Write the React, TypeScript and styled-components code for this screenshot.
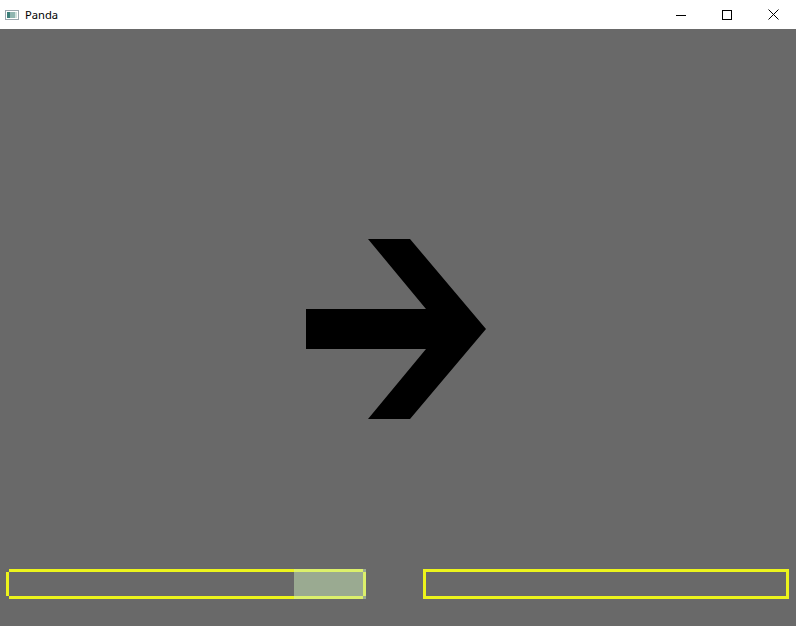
import React from "react";
import styled, { createGlobalStyle } from "styled-components";

const Global = createGlobalStyle`
  html, body { margin: 0; padding: 0; background: #696969; }
  body { font-family: "Segoe UI", "Noto Sans", "Liberation Sans", sans-serif; }
  #root { width: 796px; height: 626px; overflow: hidden; }
`;

const Window = styled.div`
  width: 796px;
  height: 626px;
  display: flex;
  flex-direction: column;
  background: #696969;
`;

const TitleBar = styled.div`
  height: 29px;
  flex: none;
  background: #ffffff;
  display: flex;
  align-items: center;
`;

const AppIcon = styled.div`
  width: 16px;
  height: 16px;
  margin-left: 4px;
  margin-right: 5px;
  display: flex;
  align-items: center;
  justify-content: center;
`;

const Title = styled.span`
  font-family: "Segoe UI", "Noto Sans", "Liberation Sans", sans-serif;
  font-size: 11.2px;
  color: #000;
  flex: 1;
  margin-top: -1px;
`;

const CtlButton = styled.div`
  width: 46px;
  height: 29px;
  display: flex;
  align-items: center;
  justify-content: center;
`;

const Stage = styled.div`
  flex: 1;
  display: flex;
  flex-direction: column;
`;

const ArrowWrap = styled.div`
  margin: 210px 0 0 306px;
  width: 180px;
  height: 180px;
`;

const Spacer = styled.div`
  flex: 1;
`;

const Controls = styled.div`
  display: flex;
  justify-content: space-between;
  align-items: flex-start;
  padding: 0 7px 27px 6px;
`;

const yellow = "#ecf41c";

const Slider = styled.div`
  position: relative;
  width: 360px;
  height: 30px;
  display: flex;
  align-items: center;
`;

const Cap = styled.div`
  width: 3px;
  height: 24px;
  background: ${yellow};
  flex: none;
`;

const Track = styled.div`
  flex: 1;
  height: 30px;
  box-sizing: border-box;
  border-top: 3px solid ${yellow};
  border-bottom: 3px solid ${yellow};
`;

const Thumb = styled.div<{ $width: number }>`
  position: absolute;
  top: 0;
  right: 0;
  height: 30px;
  width: ${(p) => p.$width}px;
  background: rgba(203, 235, 185, 0.5);
`;

const Entry = styled.div`
  width: 366px;
  height: 30px;
  box-sizing: border-box;
  border: 3px solid ${yellow};
`;

export default function App() {
  return (
    <>
      <Global />
      <Window>
        <TitleBar>
          <AppIcon>
            <svg width="14" height="12" viewBox="0 0 14 12">
              <rect x="0.5" y="1.5" width="13" height="9" fill="#fff" stroke="#9aa6ad" />
              <rect x="2" y="3" width="3" height="6" fill="#3c7f7a" />
              <rect x="5" y="3" width="5" height="6" fill="#8fb5b0" />
              <rect x="10" y="3" width="2" height="6" fill="#cfe0dc" />
            </svg>
          </AppIcon>
          <Title>Panda</Title>
          <CtlButton>
            <svg width="10" height="10" viewBox="0 0 10 10">
              <path d="M0 5.5 H10" stroke="#000" strokeWidth="1" />
            </svg>
          </CtlButton>
          <CtlButton>
            <svg width="10" height="10" viewBox="0 0 10 10">
              <rect x="0.5" y="0.5" width="9" height="9" fill="none" stroke="#000" strokeWidth="1" />
            </svg>
          </CtlButton>
          <CtlButton>
            <svg width="11" height="11" viewBox="0 0 11 11">
              <path d="M0.5 0.5 L10.5 10.5 M10.5 0.5 L0.5 10.5" stroke="#000" strokeWidth="1" />
            </svg>
          </CtlButton>
        </TitleBar>
        <Stage>
          <ArrowWrap>
            <svg width="180" height="180" viewBox="0 0 180 180">
              <polygon
                points="0,70 120,70 62,0 104,0 180,90 104,180 62,180 120,110 0,110"
                fill="#000"
              />
            </svg>
          </ArrowWrap>
          <Spacer />
          <Controls>
            <Slider>
              <Cap />
              <Track />
              <Cap />
              <Thumb $width={72} />
            </Slider>
            <Entry />
          </Controls>
        </Stage>
      </Window>
    </>
  );
}
